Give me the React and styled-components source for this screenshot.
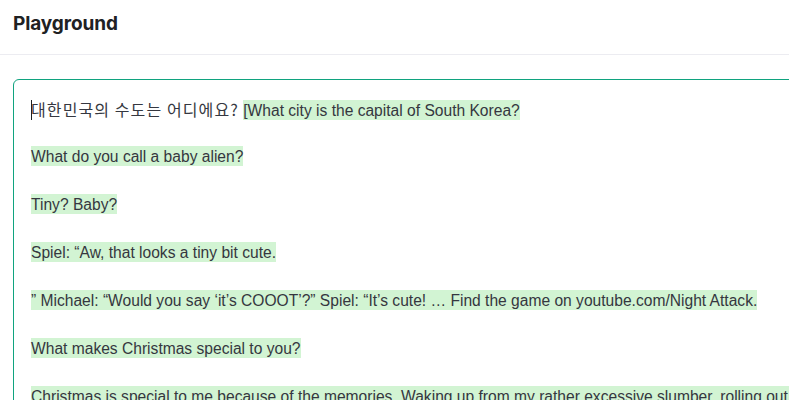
import React from "react";
import styled, { createGlobalStyle } from "styled-components";

const Global = createGlobalStyle`
  html, body { margin: 0; padding: 0; background: #fff; overflow: hidden; }
  body { font-family: "Liberation Sans", Arial, sans-serif; color: #353740; }
`;

const Page = styled.div`
  width: 789px;
  height: 400px;
  overflow: hidden;
  display: flex;
  flex-direction: column;
`;

const Header = styled.header`
  height: 55px;
  flex: none;
  box-sizing: border-box;
  border-bottom: 1px solid #ececf1;
  display: flex;
  align-items: center;
  padding: 0 13px 8px;
`;

const Title = styled.h1`
  margin: 0;
  font-family: Inter, sans-serif;
  font-size: 19px;
  font-weight: 700;
  color: #202123;
  letter-spacing: -0.1px;
`;

const Body = styled.main`
  padding: 24px 0 0 13px;
`;

const Editor = styled.div`
  width: 960px;
  height: 500px;
  box-sizing: border-box;
  border: 1px solid #10a37f;
  border-radius: 6px;
  padding: 17px 17px;
  font-size: 15.6px;
  line-height: 24px;
  white-space: nowrap;
`;

const Para = styled.p`
  margin: 0 0 24px;
  height: 24px;
`;

const Mark = styled.span`
  background: #d2f4d3;
  padding: 2px 0 1px;
`;

const Korean = styled.span`
  font-family: "Noto Sans CJK KR", sans-serif;
  font-size: 16px;
  letter-spacing: 1.1px;
  color: #353740;
`;

const Caret = styled.span`
  display: inline-block;
  width: 1px;
  height: 20px;
  background: #202123;
  vertical-align: -4px;
  margin-right: -1px;
`;

const lines = [
  "What do you call a baby alien?",
  "Tiny? Baby?",
  "Spiel: \u201cAw, that looks a tiny bit cute.",
  "\u201d Michael: \u201cWould you say \u2018it\u2019s COOOT\u2019?\u201d Spiel: \u201cIt\u2019s cute! \u2026 Find the game on youtube.com/Night Attack.",
  "What makes Christmas special to you?",
  "Christmas is special to me because of the memories. Waking up from my rather excessive slumber, rolling out of bed and running downstairs",
];

export default function App() {
  return (
    <Page>
      <Global />
      <Header>
        <Title>Playground</Title>
      </Header>
      <Body>
        <Editor>
          <Para>
            <Caret />
            <Korean>대한민국의 수도는 어디에요?</Korean>{" "}
            <Mark>[What city is the capital of South Korea?</Mark>
          </Para>
          {lines.map((l, i) => (
            <Para key={i}>
              <Mark>{l}</Mark>
            </Para>
          ))}
        </Editor>
      </Body>
    </Page>
  );
}
